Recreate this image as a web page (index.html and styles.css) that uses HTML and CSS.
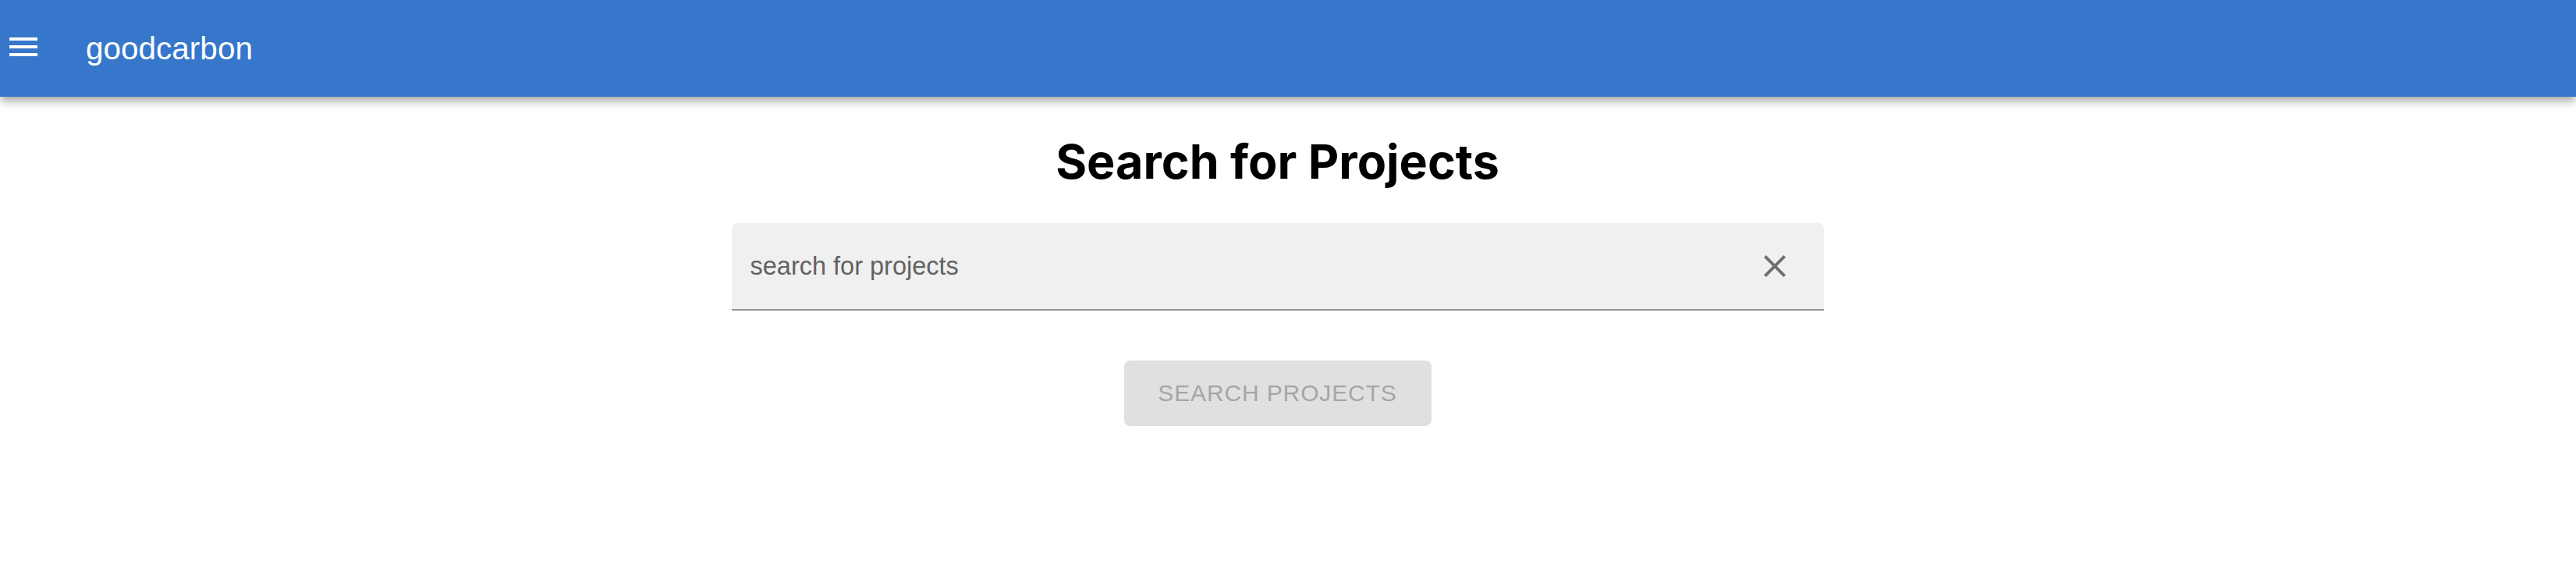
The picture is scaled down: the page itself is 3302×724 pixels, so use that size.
FILE: index.html
```html
<!DOCTYPE html>
<html lang="en">
<head>
<meta charset="utf-8">
<title>goodcarbon</title>
<link rel="stylesheet" href="styles.css">
</head>
<body>
<header class="appbar">
  <button class="menu-btn" aria-label="menu">
    <svg viewBox="0 0 24 24" width="48" height="48"><path fill="#ffffff" d="M3 18h18v-2H3v2zm0-5h18v-2H3v2zm0-7v2h18V6H3z"/></svg>
  </button>
  <div class="brand">goodcarbon</div>
</header>
<main class="content">
  <h1 class="title">Search for Projects</h1>
  <div class="field">
    <input class="field-input" type="text" placeholder="search for projects">
    <button class="clear-btn" aria-label="clear">
      <svg viewBox="0 0 24 24" width="48" height="48"><path fill="#6e6e6e" d="M19 6.41L17.59 5 12 10.59 6.41 5 5 6.41 10.59 12 5 17.59 6.41 19 12 13.41 17.59 19 19 17.59 13.41 12z"/></svg>
    </button>
  </div>
  <button class="search-btn" disabled>SEARCH PROJECTS</button>
</main>
</body>
</html>
```
FILE: styles.css
```css
html, body {
  margin: 0;
  padding: 0;
  background: #ffffff;
}
body {
  font-family: "Liberation Sans", Arial, sans-serif;
}
.appbar {
  height: 124px;
  background: #3677cb;
  display: flex;
  align-items: center;
  padding-left: 6px;
  box-shadow: 0 4px 8px -2px rgba(0,0,0,0.2), 0 8px 10px 0 rgba(0,0,0,0.14), 0 2px 20px 0 rgba(0,0,0,0.12);
  position: relative;
  z-index: 1;
}
.menu-btn {
  background: none;
  border: 0;
  padding: 0;
  width: 48px;
  height: 48px;
  margin-bottom: 4px;
  display: flex;
}
.brand {
  color: #ffffff;
  font-size: 40.5px;
  line-height: 48px;
  margin-left: 56px;
}
.content {
  display: flex;
  flex-direction: column;
  align-items: center;
  padding-right: 27px;
}
.title {
  font-family: Inter, "Liberation Sans", sans-serif;
  font-weight: 700;
  font-size: 61px;
  line-height: 74px;
  margin: 46px 0 0;
  color: #000000;
}
.field {
  margin-top: 42px;
  width: 1400px;
  height: 112px;
  box-sizing: border-box;
  background: #f0f0f0;
  border-radius: 8px 8px 0 0;
  border-bottom: 2px solid #949494;
  display: flex;
  align-items: center;
  padding: 0 39px 0 24px;
}
.field-input {
  flex: 1;
  border: 0;
  background: transparent;
  outline: none;
  padding: 0;
  font-family: "Liberation Sans", Arial, sans-serif;
  font-size: 32.5px;
  height: 36px;
  line-height: 36px;
  color: #222222;
}
.field-input::placeholder {
  color: #626262;
  opacity: 1;
}
.clear-btn {
  background: none;
  border: 0;
  padding: 0;
  width: 48px;
  height: 48px;
  display: flex;
}
.search-btn {
  margin-top: 64px;
  width: 394px;
  height: 84px;
  border: 0;
  border-radius: 8px;
  background: #e0e0e0;
  color: #a6a6a6;
  font-family: "Liberation Sans", Arial, sans-serif;
  font-size: 30px;
  letter-spacing: 0.86px;
  padding: 0;
}
```
